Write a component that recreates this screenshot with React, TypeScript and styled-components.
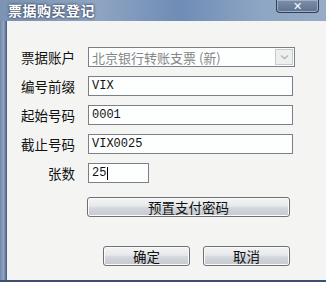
import React from "react"
import styled, { createGlobalStyle } from "styled-components"

const GlobalStyle = createGlobalStyle`
  html, body {
    margin: 0;
    padding: 0;
    background: #f4f5f3;
  }
`

const cjk = `"Noto Sans CJK SC", "Noto Sans", sans-serif`

const Window = styled.div`
  width: 326px;
  height: 282px;
  display: flex;
  flex-direction: column;
  overflow: hidden;
  font-family: ${cjk};
`

const TitleBar = styled.div`
  height: 21px;
  flex: none;
  display: flex;
  align-items: flex-start;
  background: linear-gradient(
    90deg,
    #7d93b3 0%,
    #8ea4c2 30%,
    #6f8cb6 55%,
    #8ea6c4 80%,
    #97abc6 100%
  );
`

const Title = styled.span`
  margin: 2px 0 0 8px;
  color: #ffffff;
  font-size: 14px;
  font-weight: 700;
  line-height: 16px;
  letter-spacing: 0.5px;
  text-shadow: 0 0 2px #34465e, 0 0 3px #34465e;
`

const CloseButton = styled.div`
  margin-left: auto;
  margin-right: 7px;
  width: 41px;
  height: 12px;
  display: flex;
  align-items: center;
  justify-content: center;
  border: 1px solid #2f3e54;
  border-top: none;
  border-radius: 0 0 4px 4px;
  background: linear-gradient(#7d8fa8, #5d7190);
  box-shadow: inset 0 0 0 1px #9fb0c6;
  color: #ffffff;
  font-family: "DejaVu Sans", sans-serif;
  font-size: 11px;
  font-weight: 700;
  line-height: 1;
`

const Body = styled.div`
  flex: 1;
  display: flex;
`

const SideFrame = styled.div`
  width: 7px;
  flex: none;
  background: linear-gradient(90deg, #6f88aa 0%, #8ea4c2 50%, #5c7396 85%, #3f5473 100%);
`

const Client = styled.div`
  flex: 1;
  display: flex;
  flex-direction: column;
  background: #f4f5f3;
`

const BottomFrame = styled.div`
  height: 2px;
  flex: none;
  background: #3b5070;
`

const Form = styled.div`
  margin-top: 26px;
  display: grid;
  grid-template-columns: 68px 1fr;
  column-gap: 13px;
  row-gap: 9px;
  align-items: center;
`

const Label = styled.span`
  justify-self: end;
  color: #111;
  font-size: 13.5px;
  line-height: 20px;
  white-space: nowrap;
`

const Field = styled.div<{ width: number; muted?: boolean }>`
  width: ${(p) => p.width}px;
  height: 20px;
  box-sizing: border-box;
  display: flex;
  align-items: center;
  border: 1px solid #7a7f88;
  background: #fdfffe;
  padding-left: 3px;
  color: ${(p) => (p.muted ? "#868686" : "#111")};
  font-family: ${(p) => (p.muted ? cjk : `"Liberation Mono", monospace`)};
  font-size: ${(p) => (p.muted ? 13 : 12)}px;
  white-space: nowrap;
  overflow: hidden;
`

const SelectText = styled.span`
  flex: 1;
  overflow: hidden;
`

const DropButton = styled.span`
  width: 18px;
  height: 16px;
  margin-right: 1px;
  box-sizing: border-box;
  display: flex;
  align-items: center;
  justify-content: center;
  border: 1px solid #c6c9cf;
  background: #eef0ee;
`

const Caret = styled.span`
  width: 1px;
  height: 13px;
  margin-left: 1px;
  background: #000;
`

const Button = styled.button<{ width: number }>`
  width: ${(p) => p.width}px;
  height: 20px;
  padding: 0;
  box-sizing: border-box;
  border: 1px solid #6e7074;
  border-radius: 3px;
  background: linear-gradient(
    #f3f4f5 0%,
    #e6e8ea 45%,
    #d3d7db 55%,
    #c6cacf 100%
  );
  box-shadow: inset 0 0 0 1px #fbfbfb;
  color: #111;
  font-family: ${cjk};
  font-size: 13.5px;
  line-height: 18px;
`

const PasswordRow = styled.div`
  margin-top: 11px;
  padding-left: 80px;
`

const Footer = styled.div`
  margin-top: 28px;
  padding-left: 96px;
  display: flex;
  gap: 13px;
`

const App: React.FC = () => {
  return (
    <Window>
      <GlobalStyle />
      <TitleBar>
        <Title>票据购买登记</Title>
        <CloseButton>✕</CloseButton>
      </TitleBar>
      <Body>
        <SideFrame />
        <Client>
          <Form>
            <Label>票据账户</Label>
            <Field width={207} muted>
              <SelectText>北京银行转账支票 (新)</SelectText>
              <DropButton>
                <svg width="9" height="6" viewBox="0 0 9 6">
                  <path
                    d="M1 1.5 L4.5 4.5 L8 1.5"
                    fill="none"
                    stroke="#b4b8be"
                    strokeWidth="1.6"
                  />
                </svg>
              </DropButton>
            </Field>
            <Label>编号前缀</Label>
            <Field width={205}>VIX</Field>
            <Label>起始号码</Label>
            <Field width={205}>0001</Field>
            <Label>截止号码</Label>
            <Field width={205}>VIX0025</Field>
            <Label>张数</Label>
            <Field width={61}>
              25
              <Caret />
            </Field>
          </Form>
          <PasswordRow>
            <Button width={203}>预置支付密码</Button>
          </PasswordRow>
          <Footer>
            <Button width={87}>确定</Button>
            <Button width={87}>取消</Button>
          </Footer>
        </Client>
      </Body>
      <BottomFrame />
    </Window>
  )
}

export default App
